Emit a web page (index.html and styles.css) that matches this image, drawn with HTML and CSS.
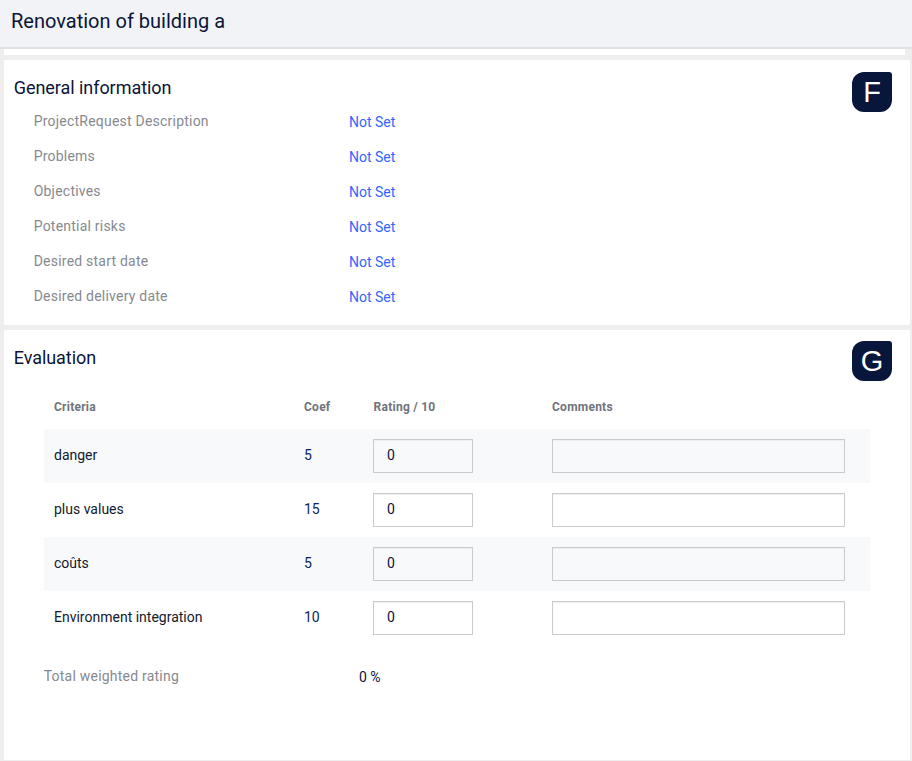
FILE: index.html
```html
<!DOCTYPE html>
<html lang="en">
<head>
  <meta charset="UTF-8" />
  <title>Renovation of building a</title>
  <link rel="stylesheet" href="styles.css" />
</head>
<body>

<header class="page-header">Renovation of building a</header>
<div class="strip"></div>

<section class="panel panel-info">
  <div class="panel-top">
    <h2>General information</h2>
    <span class="badge">F</span>
  </div>
  <div class="info-list">
    <div class="info-row"><span class="info-label">ProjectRequest Description</span><a class="info-value">Not Set</a></div>
    <div class="info-row"><span class="info-label">Problems</span><a class="info-value">Not Set</a></div>
    <div class="info-row"><span class="info-label">Objectives</span><a class="info-value">Not Set</a></div>
    <div class="info-row"><span class="info-label">Potential risks</span><a class="info-value">Not Set</a></div>
    <div class="info-row"><span class="info-label">Desired start date</span><a class="info-value">Not Set</a></div>
    <div class="info-row"><span class="info-label">Desired delivery date</span><a class="info-value">Not Set</a></div>
  </div>
</section>

<section class="panel panel-eval">
  <div class="panel-top">
    <h2>Evaluation</h2>
    <span class="badge badge-g">G</span>
  </div>
  <table class="eval-table">
    <thead>
      <tr>
        <th class="col-criteria">Criteria</th>
        <th class="col-coef">Coef</th>
        <th class="col-rating">Rating / 10</th>
        <th>Comments</th>
      </tr>
    </thead>
    <tbody>
      <tr>
        <td class="criteria">danger</td>
        <td class="coef">5</td>
        <td><input class="rating-input" type="text" value="0" /></td>
        <td><input class="comment-input" type="text" /></td>
      </tr>
      <tr>
        <td class="criteria">plus values</td>
        <td class="coef">15</td>
        <td><input class="rating-input" type="text" value="0" /></td>
        <td><input class="comment-input" type="text" /></td>
      </tr>
      <tr>
        <td class="criteria">coûts</td>
        <td class="coef">5</td>
        <td><input class="rating-input" type="text" value="0" /></td>
        <td><input class="comment-input" type="text" /></td>
      </tr>
      <tr>
        <td class="criteria">Environment integration</td>
        <td class="coef">10</td>
        <td><input class="rating-input" type="text" value="0" /></td>
        <td><input class="comment-input" type="text" /></td>
      </tr>
    </tbody>
  </table>
  <div class="total-row">
    <span class="total-label">Total weighted rating</span>
    <span class="total-value">0 %</span>
  </div>
</section>

</body>
</html>
```

FILE: styles.css
```css
* {
  box-sizing: border-box;
}

html, body {
  margin: 0;
  padding: 0;
  height: 761px;
  overflow: hidden;
}

body {
  background: #eeeeee;
  font-family: Roboto, sans-serif;
  font-size: 14px;
  color: #0a1538;
}

.page-header {
  height: 49px;
  padding: 9px 11px 0;
  background: #f2f3f7;
  border-bottom: 2px solid #e1e1e4;
  font-size: 20px;
  line-height: 24px;
}

.strip {
  height: 6px;
  margin: 0 7px 0 4px;
  background: #ffffff;
}

.panel {
  margin: 5px 2px 0 4px;
  background: #ffffff;
}

.panel-info {
  height: 265px;
}

.panel-eval {
  height: 430px;
}

.panel-top {
  display: flex;
  justify-content: space-between;
  padding: 12px 18px 0 9.7px;
}

.panel-top h2 {
  margin: 0;
  padding-top: 4px;
  font-size: 18px;
  line-height: 24px;
  font-weight: 400;
  letter-spacing: -0.05px;
}

.badge {
  width: 40px;
  height: 40px;
  display: flex;
  align-items: center;
  justify-content: center;
  background: #08163c;
  color: #ffffff;
  border-radius: 12px 3px 12px 12px;
  font-family: "Liberation Sans", sans-serif;
  font-size: 29px;
}

.badge-g {
  margin-top: -1px;
}

.info-list {
  margin-top: -8px;
  padding-left: 29.7px;
}

.info-row {
  display: flex;
  height: 35px;
  align-items: center;
}

.info-label {
  width: 315.3px;
  color: #87898f;
  letter-spacing: 0.22px;
  margin-top: -1px;
}

.info-value {
  color: #3366ff;
  margin-top: 1px;
}

.eval-table {
  margin: 3px 0 0 40px;
  width: 826px;
  border-collapse: collapse;
  table-layout: fixed;
}

.eval-table th {
  height: 45px;
  padding: 0 10px;
  text-align: left;
  font-size: 12px;
  font-weight: 700;
  color: #70737a;
  letter-spacing: 0.25px;
}

.col-criteria {
  width: 250px;
}

.col-coef {
  width: 69px;
}

.eval-table .col-rating {
  width: 179px;
  padding-left: 10.6px;
}

.eval-table td {
  height: 54px;
  padding: 0 10px;
}

.eval-table tbody tr:nth-child(odd) {
  background: #f8f9fb;
}

.eval-table .criteria,
.eval-table .coef {
  padding-bottom: 2px;
}

.criteria {
  color: #111a2e;
}

.coef {
  color: #0a1f5c;
}

.rating-input,
.comment-input {
  display: block;
  height: 34px;
  padding: 0 13px 2px;
  border: 1px solid #cbcbcd;
  box-shadow: inset 0 1px 1px #eeeeee;
  background: transparent;
  font-family: Roboto, sans-serif;
  font-size: 14px;
  color: #0a1538;
}

.rating-input {
  width: 100px;
}

.comment-input {
  width: 293px;
}

.total-row {
  display: flex;
  align-items: center;
  margin: 22px 0 0 39.7px;
}

.total-label {
  width: 315.3px;
  color: #87898f;
  letter-spacing: 0.22px;
}

.total-value {
  margin-top: 2px;
}
```
